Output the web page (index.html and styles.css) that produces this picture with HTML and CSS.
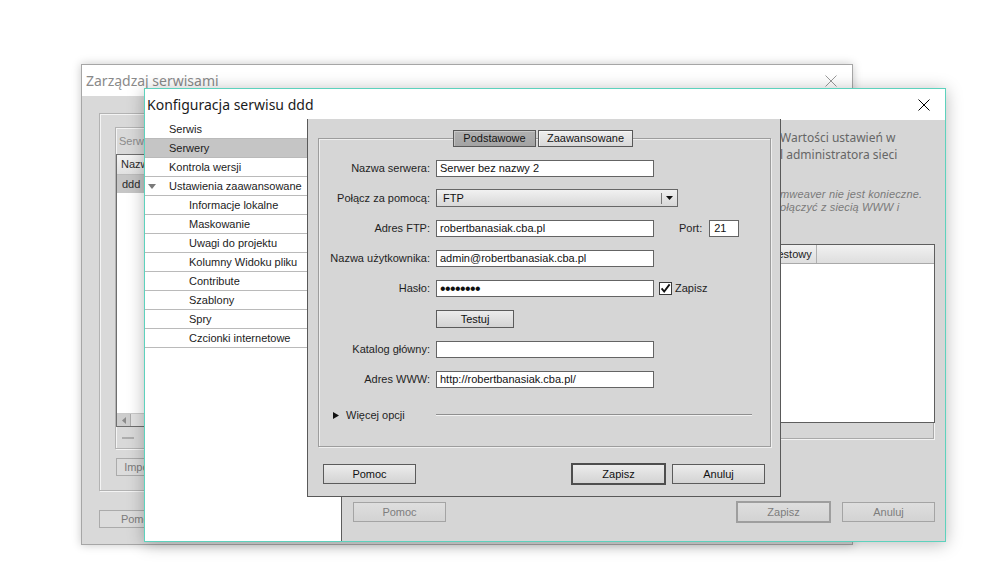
FILE: index.html
```html
<!DOCTYPE html>
<html lang="pl">
<head>
<meta charset="utf-8">
<title>Konfiguracja serwisu ddd</title>
<link rel="stylesheet" href="styles.css">
</head>
<body>
<div class="desktop">

  <section class="win win-back">
    <header class="titlebar back-tb">
      <span class="title">Zarządzaj serwisami</span>
      <svg class="close" width="12" height="12" viewBox="0 0 12 12"><path d="M0.5 0.5L11.5 11.5M11.5 0.5L0.5 11.5" stroke="currentColor" stroke-width="1" fill="none"/></svg>
    </header>
    <div class="back-body">
      <div class="etched back-panel">
        <div class="etched back-group">
          <div class="bg-caption">Serwisy</div>
          <div class="back-list">
            <div class="bl-head">Nazwa</div>
            <div class="bl-row">ddd</div>
            <div class="bl-fill"></div>
            <div class="bl-scroll">
              <span class="bl-arrow"><svg width="4" height="7" viewBox="0 0 4 7"><path d="M4 0V7L0 3.5Z" fill="#8a8a8a"/></svg></span>
              <span class="bl-thumb"></span>
            </div>
          </div>
          <div class="bg-tools"><span class="minus"></span></div>
        </div>
        <button class="back-btn btn-import">Importuj</button>
      </div>
      <button class="back-btn btn-help-back">Pomoc</button>
    </div>
  </section>

  <section class="win win-front">
    <header class="titlebar front-tb">
      <span class="title">Konfiguracja serwisu ddd</span>
      <svg class="close" width="12" height="12" viewBox="0 0 12 12"><path d="M0.5 0.5L11.5 11.5M11.5 0.5L0.5 11.5" stroke="currentColor" stroke-width="1" fill="none"/></svg>
    </header>
    <div class="front-body">
      <nav class="side">
        <div class="side-item">Serwis</div>
        <div class="side-item sel">Serwery</div>
        <div class="side-item">Kontrola wersji</div>
        <div class="side-item group"><svg width="8" height="5" viewBox="0 0 8 5"><path d="M0 0H8L4 5Z" fill="#7a7a7a"/></svg>Ustawienia zaawansowane</div>
        <div class="side-item sub">Informacje lokalne</div>
        <div class="side-item sub">Maskowanie</div>
        <div class="side-item sub">Uwagi do projektu</div>
        <div class="side-item sub">Kolumny Widoku pliku</div>
        <div class="side-item sub">Contribute</div>
        <div class="side-item sub">Szablony</div>
        <div class="side-item sub">Spry</div>
        <div class="side-item sub">Czcionki internetowe</div>
      </nav>
      <main class="main">
        <div class="main-top">
          <p class="info">Wartości ustawień w<br>l administratora sieci</p>
          <p class="note">mweaver nie jest konieczne.<br>ołączyć z siecią WWW i</p>
          <div class="srv-list">
            <div class="srv-head">
              <span class="srv-col c1"></span>
              <span class="srv-col c2"></span>
              <span class="srv-col c3"></span>
              <span class="srv-col c4">Testowy</span>
            </div>
          </div>
          <div class="srv-bar"></div>
        </div>
        <div class="main-foot">
          <button class="btn-dis">Pomoc</button>
          <span class="spacer"></span>
          <button class="btn-dis def">Zapisz</button>
          <button class="btn-dis">Anuluj</button>
        </div>
      </main>
    </div>

    <div class="dialog">
      <div class="fieldset">
        <div class="tabs">
          <span class="tab on">Podstawowe</span>
          <span class="tab off">Zaawansowane</span>
        </div>
        <div class="form">
          <span class="lbl">Nazwa serwera:</span>
          <div class="fld"><div class="inp w-std">Serwer bez nazwy 2</div></div>

          <span class="lbl">Połącz za pomocą:</span>
          <div class="fld">
            <div class="select">
              <span class="sel-val">FTP</span>
              <span class="sel-sep"></span>
              <span class="sel-btn"><svg width="7" height="4" viewBox="0 0 7 4"><path d="M0 0H7L3.5 4Z" fill="#111"/></svg></span>
            </div>
          </div>

          <span class="lbl">Adres FTP:</span>
          <div class="fld">
            <div class="inp w-std">robertbanasiak.cba.pl</div>
            <span class="port-lbl">Port:</span>
            <div class="inp w-port">21</div>
          </div>

          <span class="lbl">Nazwa użytkownika:</span>
          <div class="fld"><div class="inp w-std">admin@robertbanasiak.cba.pl</div></div>

          <span class="lbl">Hasło:</span>
          <div class="fld">
            <div class="inp w-std pwd">••••••••</div>
            <svg class="chk" width="13" height="13" viewBox="0 0 13 13"><rect x="0.5" y="0.5" width="12" height="12" fill="#fff" stroke="#3a3a3a"/><path d="M2.6 6.4L5.2 9.6L10.6 2.4" fill="none" stroke="#111" stroke-width="1.8"/></svg>
            <span class="chk-lbl">Zapisz</span>
          </div>

          <span class="lbl"></span>
          <div class="fld"><button class="btn btn-test">Testuj</button></div>

          <span class="lbl">Katalog główny:</span>
          <div class="fld"><div class="inp w-std"></div></div>

          <span class="lbl">Adres WWW:</span>
          <div class="fld"><div class="inp w-std">http://robertbanasiak.cba.pl/</div></div>
        </div>
        <div class="more">
          <span class="more-lbl"><svg width="6" height="7" viewBox="0 0 6 7"><path d="M0 0L6 3.5L0 7Z" fill="#111"/></svg>Więcej opcji</span>
          <span class="more-line"></span>
        </div>
      </div>
      <div class="dlg-btns">
        <button class="btn btn-d">Pomoc</button>
        <span class="spacer"></span>
        <button class="btn btn-d def">Zapisz</button>
        <button class="btn btn-d">Anuluj</button>
      </div>
    </div>
  </section>

</div>
</body>
</html>
```

FILE: styles.css
```css
* { box-sizing: border-box; }
html, body { margin: 0; padding: 0; }
body {
  width: 1002px;
  height: 568px;
  overflow: hidden;
  background: #fff;
  font-family: "Liberation Sans", Arial, sans-serif;
  font-size: 11px;
  color: #1c1c1c;
}
button { font: inherit; margin: 0; padding: 0; cursor: default; }
p { margin: 0; }

.desktop { position: relative; width: 1002px; height: 568px; }

/* ---------- windows ---------- */
.win { position: absolute; display: flex; flex-direction: column; }
.titlebar {
  flex: none;
  height: 31px;
  display: flex;
  align-items: center;
  justify-content: space-between;
  background: #fff;
}
.title {
  font-family: "Noto Sans", "Open Sans", sans-serif;
  font-size: 14px;
  line-height: 19px;
  white-space: nowrap;
}
.close { display: block; flex: none; }

/* ---------- back window ---------- */
.win-back {
  left: 81px;
  top: 64px;
  width: 772px;
  height: 481px;
  border: 1px solid #a6a6a6;
  background: #d9d9d9;
  box-shadow: 0 0 9px rgba(0, 0, 0, 0.22);
}
.back-tb { padding: 0 15px 0 4px; color: #8a8a8a; }
.back-tb .close { color: #999; }

.back-body {
  flex: 1;
  display: flex;
  flex-direction: column;
  align-items: flex-start;
  padding: 17px 0 0 17px;
}
.etched {
  border: 1px solid #b3b3b3;
  box-shadow: inset 1px 1px 0 #f4f4f4, 1px 1px 0 #f4f4f4;
}
.back-panel {
  width: 738px;
  height: 378px;
  padding: 13px 0 0 15px;
  display: flex;
  flex-direction: column;
  align-items: flex-start;
}
.back-group {
  width: 320px;
  height: 322px;
  display: flex;
  flex-direction: column;
}
.bg-caption { height: 26px; line-height: 26px; padding-left: 3px; color: #8c8c8c; }
.back-list {
  height: 273px;
  border: 1px solid #6e6e6e;
  display: flex;
  flex-direction: column;
  background: #fff;
}
.bl-head {
  height: 20px;
  line-height: 19px;
  padding-left: 4px;
  background: linear-gradient(#f3f3f3, #e1e1e1);
  border-bottom: 1px solid #bdbdbd;
  color: #2a2a2a;
}
.bl-row { height: 18px; line-height: 18px; padding-left: 5px; background: #c6c6c6; color: #2a2a2a; }
.bl-fill { flex: 1; }
.bl-scroll { height: 13px; display: flex; background: #e9e9e9; border-top: 1px solid #c9c9c9; }
.bl-arrow {
  width: 14px;
  background: #cdcdcd;
  border-right: 1px solid #aaa;
  display: flex;
  align-items: center;
  justify-content: center;
}
.bl-thumb { width: 30px; border-right: 1px solid #b5b5b5; background: #e2e2e2; }
.bg-tools { height: 21px; display: flex; align-items: center; padding-left: 6px; }
.minus { width: 12px; height: 2px; background: #adadad; }
.back-btn {
  height: 18px;
  border: 1px solid #ababab;
  background: #dcdcdc;
  color: #7b7b7b;
}
.btn-import { width: 56px; margin: 9px 0 0 1px; }
.btn-help-back { width: 78px; margin-top: 19px; }

/* ---------- front window ---------- */
.win-front {
  left: 144px;
  top: 88px;
  width: 802px;
  height: 454px;
  border: 1px solid #5dd2bd;
  background: #fff;
  box-shadow: 0 2px 16px rgba(0, 0, 0, 0.28);
}
.front-tb { padding: 0 15px 0 2px; color: #1b1b1b; }
.front-tb .close { color: #000; }
.front-body { flex: 1; display: flex; min-height: 0; }

.side { flex: none; width: 197px; border-right: 1px solid #5c5c5c; background: #fff; }
.side-item {
  height: 19px;
  line-height: 18px;
  border-bottom: 1px solid #bababa;
  padding-left: 24px;
  white-space: nowrap;
  color: #1c1c1c;
}
.side-item.sel { background: #c5c5c5; }
.side-item.sub { padding-left: 44px; }
.side-item.group { display: flex; align-items: center; padding-left: 3px; }
.side-item.group svg { margin-right: 13px; flex: none; }

.main { flex: 1; display: flex; flex-direction: column; background: #d6d6d6; }
.main-top {
  flex: 1;
  display: grid;
  grid-template-columns: 438px 1fr;
  align-content: start;
  padding-right: 10px;
}
.info {
  grid-column: 2;
  margin-top: 9px;
  font-family: "Noto Sans", "Open Sans", sans-serif;
  font-size: 12px;
  line-height: 17px;
  color: #666;
  white-space: nowrap;
}
.note {
  grid-column: 2;
  margin-top: 25px;
  font-family: "Liberation Sans", Arial, sans-serif;
  font-style: italic;
  font-size: 11px;
  letter-spacing: 0.15px;
  line-height: 13px;
  color: #7a7a7a;
  white-space: nowrap;
}
.srv-list {
  grid-column: 1 / -1;
  margin: 30px 0 0 13px;
  height: 179px;
  border: 1px solid #5e5e5e;
  background: #fff;
}
.srv-head {
  display: flex;
  height: 19px;
  border-bottom: 1px solid #a9a9a9;
  background: linear-gradient(#f1f1f1, #dedede);
}
.srv-col {
  flex: none;
  border-right: 1px solid #b1b1b1;
  padding-left: 3px;
  line-height: 18px;
  color: #222;
  white-space: nowrap;
  overflow: hidden;
}
.c1, .c2 { width: 160px; }
.c3 { width: 93px; }
.c4 { width: 48px; }
.srv-bar {
  grid-column: 1 / -1;
  margin-left: 13px;
  height: 17px;
  border-right: 1px solid #f3f3f3;
  border-bottom: 1px solid #f3f3f3;
  box-shadow: inset -1px -1px 0 #a9a9a9;
}
.main-foot {
  flex: none;
  display: flex;
  align-items: center;
  height: 22px;
  margin: 0 10px 18px 11px;
  gap: 11px;
}
.spacer { flex: 1; }
.btn-dis {
  width: 93px;
  height: 20px;
  border: 1px solid #a4a4a4;
  background: linear-gradient(#dedede, #d3d3d3);
  color: #7d7d7d;
}
.btn-dis.def { width: 95px; height: 22px; border: 2px solid #9e9e9e; }

/* ---------- modal dialog ---------- */
.dialog {
  position: absolute;
  left: 162px;
  top: 30px;
  width: 474px;
  height: 378px;
  border: 1px solid #595959;
  border-top: 0;
  background: #d6d6d6;
  padding: 0 9px 0 10px;
  display: flex;
  flex-direction: column;
}
.fieldset {
  margin-top: 19px;
  height: 309px;
  border: 1px solid #9d9d9d;
  box-shadow: inset 1px 1px 0 #efefef, 1px 1px 0 #efefef;
  display: flex;
  flex-direction: column;
}
.tabs {
  display: flex;
  justify-content: center;
  gap: 2px;
  margin-top: -9px;
  padding-right: 3px;
}
.tab {
  height: 17px;
  line-height: 15px;
  border: 1px solid #585858;
  text-align: center;
  color: #151515;
  background: linear-gradient(#efefef, #d8d8d8);
  box-shadow: inset 1px 1px 0 rgba(255, 255, 255, 0.6);
}
.tab.on {
  width: 83px;
  background: linear-gradient(#b1b1b1, #a3a3a3);
  box-shadow: inset 1px 1px 0 rgba(255, 255, 255, 0.3);
}
.tab.off { width: 95px; }

.form {
  display: grid;
  grid-template-columns: 111px auto;
  grid-template-rows: 30px 30px 30px 30px 30px 31px 30px 30px;
  column-gap: 6px;
  align-items: center;
  margin-top: 6px;
}
.lbl { text-align: right; white-space: nowrap; color: #1f1f1f; }
.fld { display: flex; align-items: center; }
.inp {
  height: 17px;
  border: 1px solid #646464;
  background: #fff;
  padding: 0 3px;
  line-height: 15px;
  white-space: nowrap;
  overflow: hidden;
  color: #111;
}
.w-std { width: 218px; }
.w-port { width: 30px; padding-left: 4px; }
.pwd { font-size: 16px; letter-spacing: -0.6px; }
.port-lbl { margin: 0 7px 0 25px; color: #1f1f1f; }
.chk { display: block; margin-left: 5px; flex: none; }
.chk-lbl { margin-left: 3px; color: #1f1f1f; }

.select {
  width: 242px;
  height: 18px;
  border: 1px solid #676767;
  background: linear-gradient(#f1f1f1, #d8d8d8);
  display: flex;
  align-items: center;
}
.sel-val { flex: 1; padding-left: 6px; line-height: 16px; color: #111; }
.sel-sep { width: 1px; height: 11px; background: #7a7a7a; }
.sel-btn { width: 15px; height: 16px; display: flex; align-items: center; justify-content: center; }

.btn {
  height: 18px;
  border: 1px solid #5b5b5b;
  background: linear-gradient(#ececec, #d3d3d3);
  color: #111;
}
.btn-test { width: 78px; }

.more { display: flex; align-items: center; height: 20px; margin-top: 11px; }
.more-lbl {
  flex: none;
  width: 117px;
  display: flex;
  align-items: center;
  gap: 7px;
  padding-left: 14px;
  white-space: nowrap;
  color: #1f1f1f;
}
.more-lbl svg { flex: none; }
.more-line {
  flex: 1;
  margin-right: 18px;
  height: 2px;
  border-top: 1px solid #8f8f8f;
  border-bottom: 1px solid #f2f2f2;
}

.dlg-btns {
  display: flex;
  align-items: center;
  height: 22px;
  margin-top: 16px;
  padding: 0 6px 0 5px;
  gap: 6px;
}
.btn-d { width: 93px; height: 20px; }
.btn-d.def { width: 95px; height: 22px; border: 2px solid #4e4e4e; }
```
